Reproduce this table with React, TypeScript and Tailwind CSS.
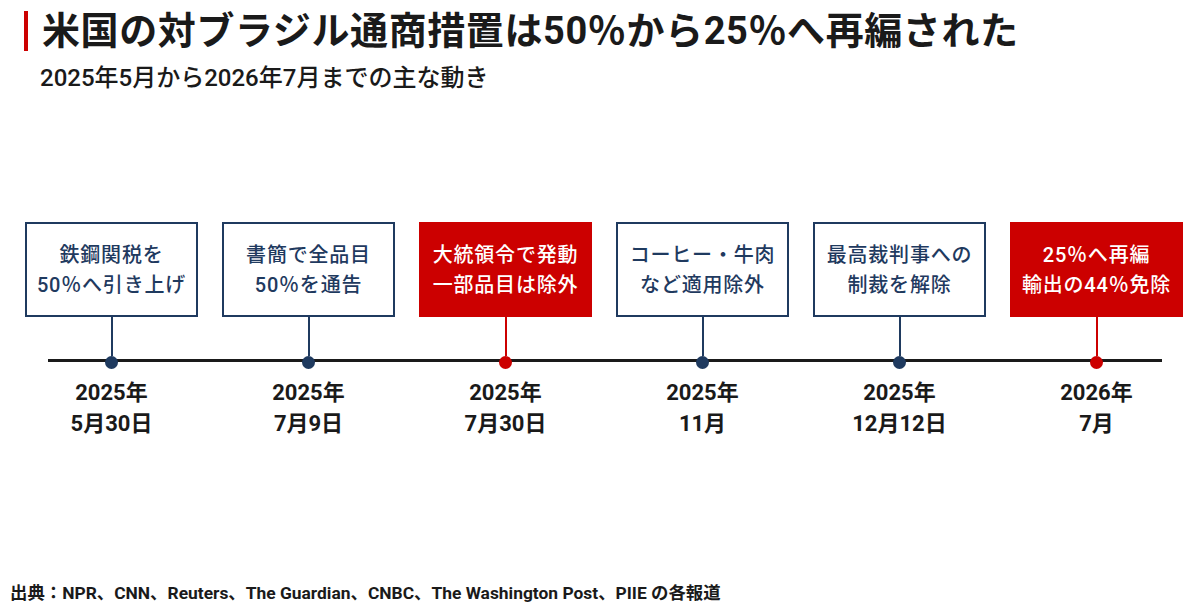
const EVENTS = [
  { lines: ["鉄鋼関税を", "50％へ引き上げ"], year: "2025年", date: "5月30日", red: false },
  { lines: ["書簡で全品目", "50％を通告"], year: "2025年", date: "7月9日", red: false },
  { lines: ["大統領令で発動", "一部品目は除外"], year: "2025年", date: "7月30日", red: true },
  { lines: ["コーヒー・牛肉", "など適用除外"], year: "2025年", date: "11月", red: false },
  { lines: ["最高裁判事への", "制裁を解除"], year: "2025年", date: "12月12日", red: false },
  { lines: ["25％へ再編", "輸出の44％免除"], year: "2026年", date: "7月", red: true },
];

export default function App() {
  return (
    <div
      className="w-[1200px] h-[615px] bg-white flex flex-col text-[#1a1a1a] overflow-hidden"
      style={{ fontFamily: "Roboto, 'Noto Sans CJK JP', sans-serif" }}
    >
      <header className="pl-[24px] pt-[7px]">
        <div className="flex items-center h-[48px]">
          <div className="w-[4px] h-[40px] bg-[#cc0000]" />
          <h1 className="ml-[14px] text-[38px] leading-[48px] font-bold tracking-[0.6px]">
            米国の対ブラジル通商措置は50％から25％へ再編された
          </h1>
        </div>
        <p className="ml-[16px] mt-[8px] h-[30px] text-[24px] leading-[30px] font-medium">
          2025年5月から2026年7月までの主な動き
        </p>
      </header>

      <div className="relative mt-[129px] ml-[13px] grid grid-cols-6 w-[1182px]">
        <div className="absolute left-[35px] top-[137px] w-[1114px] h-[3px] bg-[#1a1a1a]" />
        {EVENTS.map((ev) => (
          <div key={ev.date + ev.lines[0]} className="relative flex flex-col items-center">
            <div
              className={
                ev.red
                  ? "w-[173px] h-[95px] bg-[#cc0000] flex flex-col items-center justify-center text-white"
                  : "w-[173px] h-[95px] bg-white border-2 border-[#1f3a5f] flex flex-col items-center justify-center text-[#1f3a5f]"
              }
            >
              {ev.lines.map((l) => (
                <span key={l} className="text-[20px] leading-[30px] font-medium tracking-[0.8px]">
                  {l}
                </span>
              ))}
            </div>
            <div className={ev.red ? "w-[2px] h-[39px] bg-[#cc0000]" : "w-[2px] h-[39px] bg-[#1f3a5f]"} />
            <div
              className={
                ev.red
                  ? "w-[13px] h-[13px] rounded-full bg-[#cc0000]"
                  : "w-[13px] h-[13px] rounded-full bg-[#1f3a5f]"
              }
            />
            <div className="mt-[8px] flex flex-col items-center text-[22px] leading-[31px] font-bold">
              <span>{ev.year}</span>
              <span>{ev.date}</span>
            </div>
          </div>
        ))}
      </div>

      <footer className="mt-auto pl-[10px] pb-[11px] text-[17.4px] leading-[22px] font-bold">
        出典：NPR、CNN、Reuters、The Guardian、CNBC、The Washington Post、PIIE の各報道
      </footer>
    </div>
  );
}
